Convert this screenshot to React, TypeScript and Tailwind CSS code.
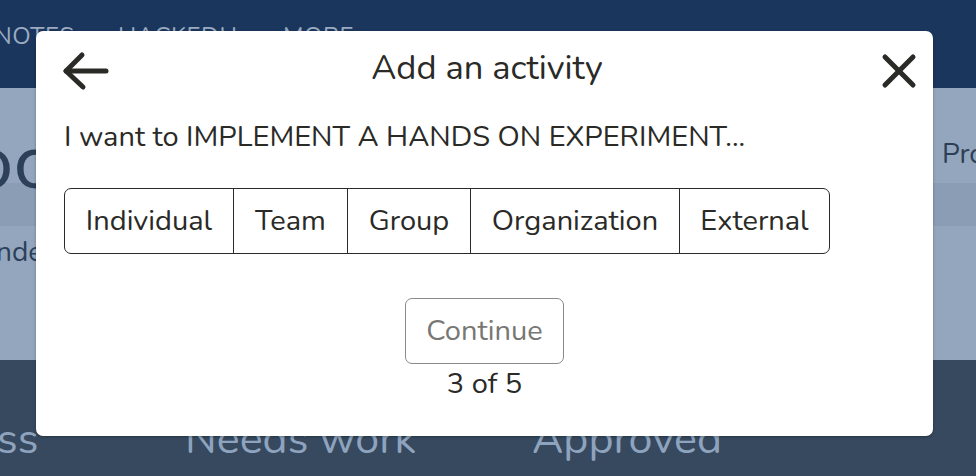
import React from "react";

const segs = [
  { label: "Individual", w: "w-[168px]" },
  { label: "Team", w: "w-[114px]" },
  { label: "Group", w: "w-[123px]" },
  { label: "Organization", w: "w-[209px]" },
  { label: "External", w: "w-[150px]" },
];

export default function App() {
  return (
    <div className="relative w-[976px] h-[476px] overflow-hidden font-['Nunito','Open_Sans',sans-serif]">
      {/* background page */}
      <div className="flex flex-col h-full">
        <div className="h-[88px] bg-[#1b365d] flex items-start pt-[18px] text-[24px] tracking-[0.5px] text-[#9aabc1]">
          <span className="-ml-[6px] w-[124px] shrink-0">NOTES</span>
          <span className="w-[165px] shrink-0">HACKEDU</span>
          <span>MORE</span>
        </div>
        <div className="h-[272px] bg-[#94a6bd] flex flex-col relative">
          <div className="absolute left-0 right-0 top-[95px] h-[43px] bg-[#8b9db5]" />
          <div className="flex items-start justify-between pt-[30px] relative">
            <span className="text-[78px] leading-[90px] text-[#2c405a] -ml-[106px]">Proc</span>
            <span className="text-[28px] leading-[36px] text-[#2d3f55] mt-[18px] mr-[-22px] w-[56px]">Pro</span>
          </div>
          <div className="mt-[26px] text-[28px] leading-[36px] text-[#2c405a] -ml-[58px] relative">Attende</div>
        </div>
        <div className="flex-1 bg-[#36495f] flex items-start pt-[52px] text-[43px] leading-[54px] text-[#8ea3bd]">
          <span className="-ml-[132px] w-[317px] shrink-0">Progress</span>
          <span className="w-[347px] shrink-0">Needs work</span>
          <span>Approved</span>
        </div>
      </div>

      {/* modal */}
      <div className="absolute left-[36px] top-[31px] w-[897px] h-[405px] bg-white rounded-[7px] shadow-[0_1px_3px_rgba(0,0,0,0.3)] flex flex-col text-[#2a2a27]">
        <div className="grid grid-cols-[1fr_auto_1fr] items-center pl-[26px] pr-[16px] pt-[20px] h-[60px]">
          <svg width="48" height="40" viewBox="0 0 48 40" fill="none" stroke="#2a2a27" strokeWidth="5" strokeLinecap="round" strokeLinejoin="round">
            <path d="M4 20 H44" />
            <path d="M20 4 L4 20 L21 36" />
          </svg>
          <span className="text-[34.5px] leading-[44px] -mt-[6px] -ml-[5px]">Add an activity</span>
          <div className="flex justify-end">
            <svg width="36" height="36" viewBox="0 0 36 36" fill="none" stroke="#2a2a27" strokeWidth="5" strokeLinecap="round">
              <path d="M4 4 L32 32" />
              <path d="M32 4 L4 32" />
            </svg>
          </div>
        </div>
        <div className="pl-[28px] mt-[28px] text-[29px] leading-[36px]">
          I want to IMPLEMENT A HANDS ON EXPERIMENT...
        </div>
        <div className="ml-[28px] mt-[33px] flex w-fit border border-[#2a2a27] rounded-[7px] h-[66px]">
          {segs.map((s, i) => (
            <div
              key={s.label}
              className={`${s.w} flex items-center justify-center text-[29px] ${i > 0 ? "border-l border-[#2a2a27]" : ""}`}
            >
              {s.label}
            </div>
          ))}
        </div>
        <div className="flex flex-col items-center mt-[44px]">
          <div className="w-[159px] h-[66px] border border-[#8a8a8a] rounded-[7px] flex items-center justify-center text-[29px] text-[#777774]">
            Continue
          </div>
          <div className="text-[29px] leading-[36px] mt-[2px]">3 of 5</div>
        </div>
      </div>
    </div>
  );
}
